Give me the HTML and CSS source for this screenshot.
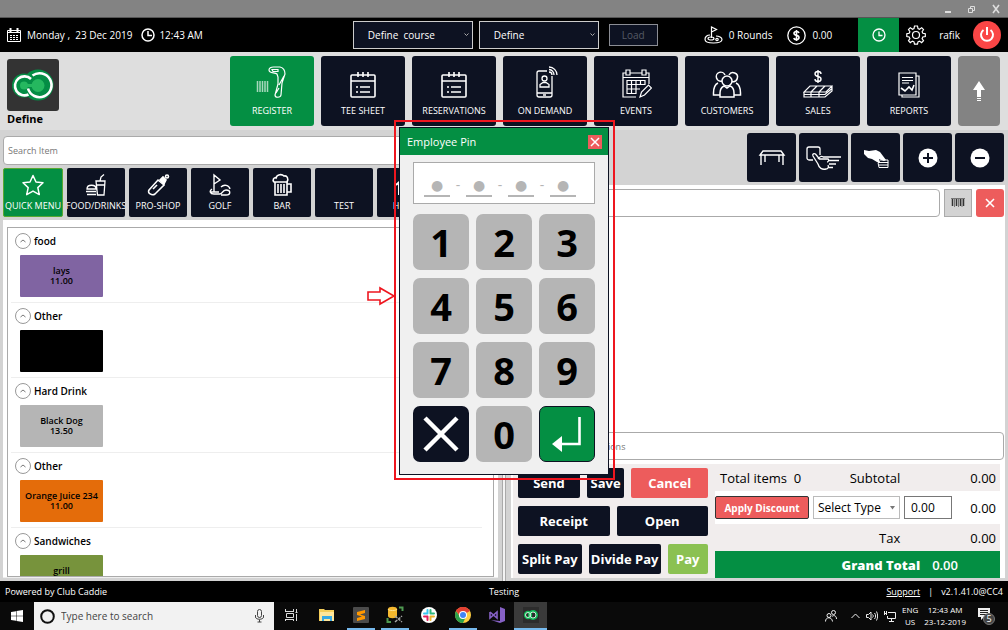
FILE: index.html
```html
<!DOCTYPE html>
<html lang="en">
	<head>
		<meta charset="utf-8">
		<title>Club Caddie Register</title>
		<meta name="viewport" content="width=device-width, initial-scale=1">
		<link rel="stylesheet" href="styles.css">
	</head>
	<body>
		<!-- Window title bar -->
		<div class="titlebar">
			<button class="win-btn" aria-label="Minimize"><svg width="10" height="10" viewBox="0 0 10 10"><path d="M2 7h6v2H2z" fill="#ddd"/></svg></button>
			<button class="win-btn" aria-label="Restore"><svg width="10" height="10" viewBox="0 0 10 10" fill="none" stroke="#ddd"><path d="M1.500 4.500h4v4h-4zM3.500 4V2.500h4v4H6"/></svg></button>
			<button class="win-btn" aria-label="Close"><svg width="10" height="10" viewBox="0 0 10 10" stroke="#ddd" stroke-width="1.600"><path d="M2 1l6 8M8 1L2 9"/></svg></button>
		</div>

		<!-- Date, course choice and user -->
		<header class="topbar">
			<div class="clock">
				<svg width="14" height="14" viewBox="0 0 14 14" fill="none" stroke="#fff"><path d="M.5 2.500h13v11H.5zM1 4.500h12" /><path d="M3.500 0v4M10.500 0v4" stroke-width="2"/><path d="M3 7.500h8M3 9.500h8M3 11.500h8" stroke-dasharray="2 1"/></svg>
				<span class="date">Monday ,&nbsp; 23 Dec 2019</span>
				<svg width="14" height="14" viewBox="0 0 14 14" fill="none" stroke="#fff" stroke-width="1.500"><circle cx="7" cy="7" r="6"/><path d="M7 3v4.500h4"/></svg>
				<span>12:43 AM</span>
			</div>
			<div class="pickers">
				<label class="picker">
					<select aria-label="Course"><option>Define&nbsp; course</option></select>
					<svg width="5" height="4" viewBox="0 0 5 4" fill="none" stroke="#aaa"><path d="M.5.5l2 2 2-2"/></svg>
				</label>
				<label class="picker">
					<select aria-label="Register"><option>Define</option></select>
					<svg width="5" height="4" viewBox="0 0 5 4" fill="none" stroke="#aaa"><path d="M.5.5l2 2 2-2"/></svg>
				</label>
				<button class="load" disabled>Load</button>
			</div>
			<div class="user">
				<svg width="19" height="18" viewBox="0 0 19 18" fill="none" stroke="#fff" stroke-width="1.200"><path d="M7.500 12V1l5 2.500-5 2.500"/><path d="M6 9C3 9 1 11 1 13.200 1 15.500 4 17 9.500 17S18 15.500 18 13.500 15 10 12 10"/><ellipse cx="7" cy="12.500" rx="3" ry="1.500"/><circle cx="13" cy="13.500" r="1.200"/></svg>
				<span class="rounds">0 Rounds</span>
				<svg width="19" height="19" viewBox="0 0 19 19" fill="none" stroke="#fff" stroke-width="1.300"><circle cx="9.500" cy="9.500" r="8.700"/><path d="M12 7c-.3-1-1.200-1.500-2.500-1.500S7 6 7 7.300s1 1.800 2.500 2.100S12 10.300 12 11.600s-1 2-2.500 2S7 13 6.800 12M9.500 4v11" stroke-width="1.600"/></svg>
				<span class="cash">0.00</span>
				<button class="time-btn" aria-label="Time clock"><svg width="14" height="14" viewBox="0 0 14 14" fill="none" stroke="#fff" stroke-width="1.300"><circle cx="7" cy="7" r="6"/><path d="M7 3.500V7.500h3.500"/></svg></button>
				<button class="plain" aria-label="Settings"><svg width="20" height="20" viewBox="0 0 20 20" fill="none" stroke="#fff" stroke-width="1.200"><path d="M8.500 1h3l.5 2.500 1.500.7 2.200-1.500 1.800 1.800-1.400 2.200.7 1.600 2.500.4v2.800l-2.500.5-.7 1.600 1.400 2.100-1.900 1.900-2.100-1.500-1.500.7-.5 2.400h-3l-.5-2.400-1.500-.7-2.200 1.500-1.800-1.900 1.400-2.100-.7-1.600L.8 11.500V8.700l2.400-.4.7-1.600L2.500 4.500l1.800-1.800 2.200 1.500L8 3.500z"/><circle cx="10" cy="10" r="3.500"/></svg></button>
				<span class="name">rafik</span>
				<button class="power" aria-label="Log out"><svg width="16" height="16" viewBox="0 0 16 16" fill="none" stroke="#fff" stroke-width="2"><path d="M8 0v8M4.500 3a6 6 0 1 0 7 0"/></svg></button>
			</div>
		</header>

		<!-- Main navigation -->
		<nav class="nav">
			<div class="brand">
				<div class="logo">
					<svg width="52" height="52" viewBox="0 0 52 52"><g fill="#048d45"><circle cx="17" cy="26.500" r="12"/><circle cx="31" cy="26" r="15.500"/></g><g fill="#25b85f"><circle cx="17" cy="26.500" r="4"/><circle cx="31" cy="26.500" r="6.500"/><path d="M17 25h14v3H17z"/></g><g fill="none" stroke="#fff" stroke-width="2.600"><path d="M24 20a9.500 9.500 0 1 0-2.500 15.500"/><path d="M25.500 16.500a12 12 0 1 1-4.500 13"/></g></svg>
				</div>
				<strong>Define</strong>
			</div>
			<button class="nav-btn active">
				<svg width="32" height="34" viewBox="0 0 32 34" fill="none" stroke="#fff" stroke-width="1.200"><path d="M1.500 15v11M4 15v11M6.500 15v11M9 15v11M11.500 15v11" stroke="#a6d8bd" stroke-width="1.500"/><path d="M13 4c0-2 2-3 4.500-3H24c4 1 5 4 5 7l-3 9-1 12c-.5 3-6 3-6 0l3-11V11l-1-3c-2-2-8 0-8-4zM16 3.500h6v2h-5zM23 19l5-9M20 27l3-5"/></svg>
				REGISTER
			</button>
			<button class="nav-btn">
				<svg width="28" height="34" viewBox="0 0 28 34" fill="none" stroke="#fff" stroke-width="1.600"><rect x="2" y="9" width="24" height="22" rx="1"/><path d="M2 15h24M9 6v5M14 6v5M19 6v5M7 21h2M11 21h10M7 26h2M11 26h10"/></svg>
				TEE SHEET
			</button>
			<button class="nav-btn">
				<svg width="28" height="34" viewBox="0 0 28 34" fill="none" stroke="#fff" stroke-width="1.600"><rect x="2" y="9" width="24" height="22" rx="1"/><path d="M2 15h24M9 6v5M14 6v5M19 6v5M7 21h2M11 21h10M7 26h2M11 26h10"/></svg>
				RESERVATIONS
			</button>
			<button class="nav-btn">
				<svg width="28" height="34" viewBox="0 0 28 34" fill="none" stroke="#fff" stroke-width="1.300"><path d="M16 5H8a2 2 0 0 0-2 2v22a2 2 0 0 0 2 2h11a2 2 0 0 0 2-2V10M6 27h15M12 29h3"/><circle cx="13.500" cy="12.500" r="2.500"/><path d="M9 21v-2.500l3-2h3l3 2V21zM18 6a3 3 0 0 1 3 3M18 3.500A5.500 5.500 0 0 1 23 9M18 1a8 8 0 0 1 8 8"/></svg>
				ON DEMAND
			</button>
			<button class="nav-btn">
				<svg width="32" height="34" viewBox="0 0 32 34" fill="none" stroke="#fff" stroke-width="1.200"><path d="M16 31H3V7h3M10 7h12M26 7h3v11M3 11.500h26"/><path d="M6 4h4v5H6zM22 4h4v5h-4zM7 14.500h18v4H7zM7 18.500h9v9H7zM7 23h13M11.500 14.500v13M16 14.500v4M20.500 14.500v4M20 31l1.500-5 7-7 3 3-7 7z"/></svg>
				EVENTS
			</button>
			<button class="nav-btn">
				<svg width="30" height="34" viewBox="0 0 30 34" fill="none" stroke="#fff" stroke-width="1.500"><circle cx="15" cy="15" r="5"/><path d="M8 31v-4c0-4 2-6 4-7l3 2 3-2c3 1 4 3 4 7v4zM10 15a4.500 4.500 0 1 1 3-6M17 9a4.500 4.500 0 1 1 3 6.500M6 17c-3 1.500-4.500 5-4.500 10v2H8M24 17c3 1.500 4.500 5 4.500 10v2H22"/></svg>
				CUSTOMERS
			</button>
			<button class="nav-btn">
				<svg width="30" height="34" viewBox="0 0 30 34" fill="none" stroke="#fff" stroke-width="1.200"><path d="M18 8c0-1.500-1-2.500-3-2.500S12 6.500 12 8s1 2 3 2.500 3 1 3 2.500-1 2.500-3 2.500-3-1-3-2.500M15 4v13" stroke-width="1.400"/><path d="M7 20h22l-6 6H1zM14 20l-6 6M22 20l-6 6M1 26v5h21l7-6v-5M1 28.500h21l7-6M8 26v5M16 26v5"/></svg>
				SALES
			</button>
			<button class="nav-btn">
				<svg width="26" height="34" viewBox="0 0 26 34" fill="none" stroke="#fff" stroke-width="1.200"><path d="M3 7h17v22H3zM20 10h3v21H6v-2M6 11.500h11M6 14.500h11M6 17h7"/><path d="M5 22l4 3 4-4 3 3 2-5" stroke-width="1.600"/></svg>
				REPORTS
			</button>
			<button class="nav-up" aria-label="Scroll up"><svg width="12" height="22" viewBox="0 0 12 22" fill="#fff"><path d="M6 1l6 9H8v7H4v-7H0zM4 18h4v1H4zM4 20h4v1H4z"/></svg></button>
		</nav>

		<main class="main">
			<!-- Item menu -->
			<section class="menu">
				<input class="search" type="text" placeholder="Search Item" aria-label="Search Item">
				<div class="tabs">
					<button class="tab active">
						<svg width="24" height="24" viewBox="0 0 24 24" fill="none" stroke="#fff" stroke-width="1.500" stroke-linejoin="round"><path d="M12 2.500l3 6.500 7 .8-5.200 4.800 1.500 7-6.300-3.500-6.300 3.500 1.500-7L2 9.800 9 9z"/></svg>
						QUICK MENU
					</button>
					<button class="tab">
						<svg width="24" height="24" viewBox="0 0 24 24" fill="none" stroke="#fff" stroke-width="1.300"><path d="M12 8h9l-1 14h-6.500zM16 8l1-4 3-2.500M13 12h8M3 16c0-5 9-5 9 0zM2 18.500h10M3 21.500h9"/></svg>
						FOOD/DRINKS
					</button>
					<button class="tab">
						<svg width="24" height="24" viewBox="0 0 24 24" fill="none" stroke="#fff" stroke-width="1.600"><path d="M3 17l9-10 6 5-9 9c-3 2-8-1-6-4z"/><path d="M14 7l4 4 2-4-3-3z" fill="#fff"/><circle cx="21" cy="3.500" r="1.500"/><path d="M7 16l4-4"/></svg>
						PRO-SHOP
					</button>
					<button class="tab">
						<svg width="24" height="24" viewBox="0 0 24 24" fill="none" stroke="#fff" stroke-width="1.400"><path d="M6 19V2l6 5-6 4M4 16c-3 2-2 5 2 5h6c3 0 2-4 6-4 5 0 5 5 0 5h-5M13 14c3-3 8-2 9 2M3 19h8"/></svg>
						GOLF
					</button>
					<button class="tab">
						<svg width="24" height="24" viewBox="0 0 24 24" fill="none" stroke="#fff" stroke-width="1.600"><path d="M5 9v13h12V9M17 11h4v8h-4M8 11v9M11 11v9M14 11v9"/><path d="M4 9c-2-2 0-5 2-4 1-4 6-4 8-2 3-1 5 3 3 6z"/></svg>
						BAR
					</button>
					<button class="tab">
						<svg width="24" height="24" viewBox="0 0 24 24"></svg>
						TEST
					</button>
					<button class="tab">
						<svg width="24" height="24" viewBox="0 0 24 24" fill="none" stroke="#fff" stroke-width="2"><path d="M2 12L12 3l10 9M5 11v10h5v-6h4v6h5V11"/></svg>
						HOME
					</button>
				</div>
				<div class="list-frame">
					<div class="list">
						<section class="group">
							<h2><button class="fold" aria-label="Collapse food"><svg width="6" height="4" viewBox="0 0 6 4" fill="none" stroke="#777"><path d="M.5 3L3 1l2.500 2"/></svg></button>food</h2>
							<button class="item purple">lays<br>11.00</button>
						</section>
						<section class="group">
							<h2><button class="fold" aria-label="Collapse Other"><svg width="6" height="4" viewBox="0 0 6 4" fill="none" stroke="#777"><path d="M.5 3L3 1l2.500 2"/></svg></button>Other</h2>
							<button class="item black" aria-label="Item"></button>
						</section>
						<section class="group">
							<h2><button class="fold" aria-label="Collapse Hard Drink"><svg width="6" height="4" viewBox="0 0 6 4" fill="none" stroke="#777"><path d="M.5 3L3 1l2.500 2"/></svg></button>Hard Drink</h2>
							<button class="item gray">Black Dog<br>13.50</button>
						</section>
						<section class="group">
							<h2><button class="fold" aria-label="Collapse Other"><svg width="6" height="4" viewBox="0 0 6 4" fill="none" stroke="#777"><path d="M.5 3L3 1l2.500 2"/></svg></button>Other</h2>
							<button class="item orange">Orange Juice 234<br>11.00</button>
						</section>
						<section class="group">
							<h2><button class="fold" aria-label="Collapse Sandwiches"><svg width="6" height="4" viewBox="0 0 6 4" fill="none" stroke="#777"><path d="M.5 3L3 1l2.500 2"/></svg></button>Sandwiches</h2>
							<button class="item green">grill<br>&nbsp;</button>
						</section>
					</div>
				</div>
			</section>

			<div class="splitter"></div>

			<!-- Current order -->
			<section class="order">
				<div class="actions">
					<button class="action" aria-label="Table"><svg width="28" height="24" viewBox="0 0 28 24" fill="none" stroke="#fff" stroke-width="1.400"><path d="M5 5h18l3 4H2zM3 9v10M25 9v10M7 9v7M21 9v7"/></svg></button>
					<button class="action" aria-label="Select"><svg width="36" height="28" viewBox="0 0 36 28" fill="none" stroke="#fff" stroke-width="1.300"><path d="M7 16H3a2 2 0 0 1-2-2V5a2 2 0 0 1 2-2h9a2 2 0 0 1 2 2v6"/><path d="M12 20L7 12c-1-2 1-3 2.500-2l4 5H22c1 0 1 3-1 3M12 20c1 4 4 6 8 5 2 0 3-2 2-4M17 13h18M22 16.500h11M23 20h7M22 23.500h5M12 15c2-3 4-3 5-2"/></svg></button>
					<button class="action" aria-label="Card payment"><svg width="28" height="24" viewBox="0 0 28 24"><path d="M2 4l5 1 7-1 4 2 6 8-2 1-5-2 1 3-3 0-5-3-4-1-4-4z" fill="#fff"/><path d="M16 16.500h10v5H17zM17 19h9M18 14h8v3" fill="none" stroke="#fff"/></svg></button>
					<button class="action" aria-label="Add"><svg width="20" height="20" viewBox="0 0 20 20"><circle cx="10" cy="10" r="9.500" fill="#fff"/><path d="M10 5v10M5 10h10" stroke="#0d1222" stroke-width="2"/></svg></button>
					<button class="action" aria-label="Remove"><svg width="20" height="20" viewBox="0 0 20 20"><circle cx="10" cy="10" r="9.500" fill="#fff"/><path d="M5 10h10" stroke="#0d1222" stroke-width="2"/></svg></button>
				</div>
				<div class="order-body">
					<div class="scan">
						<input class="field" type="text" aria-label="Customer">
						<button class="barcode" aria-label="Scan barcode"><svg width="14" height="10" viewBox="0 0 14 10" stroke="#333"><path d="M0 .5h14" stroke="#777"/><path d="M1.500 1v7M5.500 1v7M9.500 1v7M12.500 1v7" stroke-width="1.500"/><path d="M3.500 1v8M7.500 1v8M11 1v8" stroke="#777"/></svg></button>
						<button class="clear" aria-label="Clear"><svg width="10" height="10" viewBox="0 0 10 10" stroke="#fff" stroke-width="1.600"><path d="M1 1l8 8M9 1L1 9"/></svg></button>
					</div>
					<div class="lines"></div>
					<input class="field note" type="text" placeholder="Special Instructions" aria-label="Special Instructions">
					<div class="checkout">
						<div class="pay">
							<div class="pay-row"><button class="send">Send</button><button class="save">Save</button><button class="cancel">Cancel</button></div>
							<div class="pay-row halves"><button>Receipt</button><button>Open</button></div>
							<div class="pay-row"><button class="split">Split Pay</button><button class="divide">Divide Pay</button><button class="pay-now">Pay</button></div>
						</div>
						<div class="totals">
							<div class="total-row">
								<span>Total items&nbsp; 0</span>
								<span class="label">Subtotal</span>
								<span class="value">0.00</span>
							</div>
							<div class="total-row discount">
								<button class="apply">Apply Discount</button>
								<label class="type"><select aria-label="Discount type"><option>Select Type</option></select><svg width="5" height="4" viewBox="0 0 5 4" fill="#777"><path d="M0 0h5L2.500 3.500z"/></svg></label>
								<input class="amount" type="text" value="0.00" aria-label="Discount amount">
								<span class="value">0.00</span>
							</div>
							<div class="total-row">
								<span class="label">Tax</span>
								<span class="value">0.00</span>
							</div>
							<div class="total-row grand"><strong>Grand Total</strong><span>0.00</span></div>
						</div>
					</div>
				</div>
			</section>
		</main>

		<footer class="status">
			<span>Powered by Club Caddie</span>
			<span>Testing</span>
			<span class="version"><a href="#">Support</a><span>|</span><span>v2.1.41.0@CC4</span></span>
		</footer>

		<!-- Desktop taskbar -->
		<div class="taskbar">
			<button class="start" aria-label="Start"><svg width="12" height="12" viewBox="0 0 12 12" fill="#fff"><path d="M0 2l5-.8v4.500H0zM5.500 1L12 0v5.700H5.500zM0 6.300h5v4.500L0 10zM5.500 6.300H12V12l-6.500-1z"/></svg></button>
			<label class="find">
				<svg width="15" height="15" viewBox="0 0 15 15" fill="none" stroke="#111" stroke-width="2"><circle cx="7.500" cy="7.500" r="6.300"/></svg>
				<input type="text" placeholder="Type here to search" aria-label="Type here to search">
				<svg width="9" height="14" viewBox="0 0 9 14" fill="none" stroke="#444"><rect x="2.500" y=".5" width="4" height="8" rx="2"/><path d="M.5 6v2c0 3 8 3 8 0V6M4.500 10.500V13M2.500 13h4"/></svg>
			</label>
			<div class="apps">
				<button class="app view" aria-label="Task view"><svg width="13" height="12" viewBox="0 0 13 12" fill="none" stroke="#ddd"><path d="M.5 0v2M8.500 0v2M0 2.500h9M1.500 4.500h7v4h-7zM0 10.500h9M.5 10v2M8.500 10v2M11.500 0v3M11.500 5v7M10.500 3.500h2"/></svg></button>
				<button class="app" aria-label="File Explorer"><svg width="16" height="14" viewBox="0 0 16 14"><path d="M0 1h5l1 1h9v11H0z" fill="#f5ce5a"/><path d="M1 4h14v9H1z" fill="#ffe69a"/><path d="M3 8h10v5h-2v-2H5v2H3z" fill="#38a9e4"/></svg></button>
				<button class="app open" aria-label="Sublime Text"><svg width="18" height="18" viewBox="0 0 18 18"><rect x="1" y="1" width="16" height="16" rx="1" fill="#4b4b4b"/><path d="M13 4v3L8 8.500l5 1.500v3l-8 2v-3l5-1.500L5 9V6z" fill="#ff9800"/></svg></button>
				<button class="app open" aria-label="SQL Server"><svg width="18" height="18" viewBox="0 0 18 18"><path d="M2 3c0-3 9-3 9 0v7c0 3-9 3-9 0z" fill="#f5b82e"/><path d="M2 3c0 2 9 2 9 0" fill="none" stroke="#ffe391"/><path d="M13 1.500h3.500V5M1.500 12v4H5" stroke="#4f9a51" stroke-width="2" fill="none"/><path d="M9 16l7-6M9 10l7 6" stroke="#aaa" stroke-width="1.500" stroke-dasharray="3 1"/></svg></button>
				<button class="app" aria-label="Slack"><svg width="16" height="16" viewBox="0 0 16 16"><circle cx="8" cy="8" r="8" fill="#fff"/><g fill="none" stroke-width="2" stroke-linecap="round"><path d="M6.500 3v3.500M3 6.500h3" stroke="#36c5f0"/><path d="M9.500 3v3.500M10 6.500h3" stroke="#2eb67d"/><path d="M9.500 9.500V13M10 9.500h3" stroke="#ecb22e"/><path d="M6.500 9.500V13M3 9.500h3" stroke="#e01e5a"/></g></svg></button>
				<button class="app open" aria-label="Chrome"><svg width="16" height="16" viewBox="0 0 16 16"><circle cx="8" cy="8" r="8" fill="#ffcd40"/><path d="M8 8L1.100 4A8 8 0 0 1 14.900 4z" fill="#e34133"/><path d="M1.100 4A8 8 0 0 0 8 16l3-6.500H5z" fill="#2ba24c"/><path d="M8 4h6.900A8 8 0 0 0 1.100 4L5 9z" fill="#e34133"/><circle cx="8" cy="8" r="4" fill="#fff"/><circle cx="8" cy="8" r="3" fill="#4285f4"/></svg></button>
				<button class="app" aria-label="Visual Studio"><svg width="17" height="16" viewBox="0 0 17 16"><path d="M1 5v6l7-6v6L1 5" fill="none" stroke="#8661c5" stroke-width="1.600"/><path d="M11 0l5 2v12l-5 2-9-3 9 1z" fill="#8661c5"/></svg></button>
				<button class="app open current" aria-label="Club Caddie"><svg width="16" height="16" viewBox="0 0 16 16" fill="none" stroke="#12b857" stroke-width="2"><rect width="16" height="16" fill="#2c2c2c" stroke="none"/><circle cx="5" cy="8" r="3.200"/><circle cx="10" cy="8" r="4"/><circle cx="10" cy="8" r="3" stroke="#c8f0d8" stroke-width="1"/><circle cx="5" cy="8" r="2.500" stroke="#c8f0d8" stroke-width="1"/></svg></button>
			</div>
			<div class="tray">
				<svg class="people" width="12" height="12" viewBox="0 0 12 12" fill="none" stroke="#eee"><circle cx="4" cy="5.500" r="2"/><path d="M.5 11.500c0-5 6.500-5 7 0"/><circle cx="8.500" cy="2.500" r="2"/><path d="M7 6.500c2-2 4.500-.5 4.500 2.500"/></svg>
				<svg width="9" height="6" viewBox="0 0 9 6" fill="none" stroke="#eee"><path d="M.5 5l4-4 4 4"/></svg>
				<svg width="12" height="12" viewBox="0 0 12 12" fill="none" stroke="#eee"><path d="M.5 4.500h2L5 2v8L2.500 7.500h-2zM6.500 4.500c1 1 1 2 0 3M8.500 3c1.500 2 1.500 4 0 6M10.500 1.500c1.500 3 1.500 6 0 9"/></svg>
				<svg width="12" height="12" viewBox="0 0 12 12" fill="none" stroke="#eee"><path d="M4 2.500h7.500v6h-8V6M7.500 8.500v3M5 11.500h5M.5 1v4M2.500 1v4M0 3.500h3"/></svg>
				<span class="stack">ENG<br>US</span>
				<span class="stack when">12:43 AM<br>23-12-2019</span>
				<svg width="18" height="18" viewBox="0 0 18 18"><path d="M1 1h12v9H7l-3 3v-3H1z" fill="#eee"/><path d="M3 3.500h8M3 5.500h8M3 7.500h8" stroke="#222"/><circle cx="12" cy="12" r="5.500" fill="#444" stroke="#777"/><text class="badge" x="12" y="15" text-anchor="middle">5</text></svg>
			</div>
		</div>

		<!-- Pin pad, framed by the callout -->
		<div class="callout">
			<svg class="arrow" width="29" height="20" viewBox="0 0 29 20" fill="#fff" stroke="#ee161f" stroke-width="1.600"><path d="M1 6h12V2l14 8-14 8v-4H1z"/></svg>
			<form class="pin" role="dialog" aria-label="Employee Pin">
				<div class="pin-head">
					<span>Employee Pin</span>
					<button type="button" class="pin-close" aria-label="Close"><svg width="10" height="10" viewBox="0 0 10 10" stroke="#fff" stroke-width="1.500"><path d="M1 1l8 8M9 1L1 9"/></svg></button>
				</div>
				<div class="pin-body">
					<div class="digits">
						<input type="text" placeholder="●" maxlength="1" aria-label="Digit 1"><span>-</span><input type="text" placeholder="●" maxlength="1" aria-label="Digit 2"><span>-</span><input type="text" placeholder="●" maxlength="1" aria-label="Digit 3"><span>-</span><input type="text" placeholder="●" maxlength="1" aria-label="Digit 4">
					</div>
					<div class="keys">
						<button type="button">1</button>
						<button type="button">2</button>
						<button type="button">3</button>
						<button type="button">4</button>
						<button type="button">5</button>
						<button type="button">6</button>
						<button type="button">7</button>
						<button type="button">8</button>
						<button type="button">9</button>
						<button type="button" class="erase" aria-label="Clear"><svg width="36" height="36" viewBox="0 0 36 36" stroke="#fff" stroke-width="4.500"><path d="M2 2l32 32M34 2L2 34"/></svg></button>
						<button type="button">0</button>
						<button type="button" class="enter" aria-label="Enter"><svg width="30" height="36" viewBox="0 0 30 36"><path d="M27.500 1v27H9" fill="none" stroke="#fff" stroke-width="2.600"/><path d="M0 28l10-8v16z" fill="#fff"/></svg></button>
					</div>
				</div>
			</form>
		</div>
	</body>
</html>
```
FILE: styles.css
```css
* {
	box-sizing: border-box;
}
body {
	display: flex;
	flex-direction: column;
	height: 100vh;
	margin: 0;
	overflow: hidden;
	background-color: #d3d3d3;
	color: #000;
	font-family: "Open Sans", "Noto Sans", sans-serif;
	font-size: 10px;
}
button, input, select {
	margin: 0;
	padding: 0;
	border: none;
	border-radius: 0;
	background: none;
	color: inherit;
	font-family: inherit;
	font-size: inherit;
}
select {
	appearance: none;
}
svg {
	display: block;
	flex: none;
}

/* Title bar */
.titlebar {
	display: flex;
	justify-content: flex-end;
	align-items: center;
	gap: 14px;
	height: 18px;
	padding-right: 7px;
	background-color: #838383;
	border-bottom: 1px solid #555;
}

/* Top bar */
.topbar {
	display: flex;
	height: 34px;
	background-color: #000;
	color: #fff;
}
.clock {
	display: flex;
	align-items: center;
	gap: 4px;
	width: 35%;
	padding-left: 7px;
}
.date {
	margin: 0 5px 0 2px;
}
.pickers {
	display: flex;
	align-items: center;
	gap: 6px;
}
.picker {
	display: flex;
	align-items: center;
	width: 120px;
	height: 28px;
	padding: 0 3px 0 14px;
	border: 1px solid #ccc;
	background-color: #0d1222;
}
.picker select {
	flex: 1;
	height: 100%;
}
.load {
	width: 49px;
	height: 22px;
	margin-left: 4px;
	border: 1px solid #8b8d94;
	background-color: #0d1222;
	color: #555a66;
}
.user {
	display: flex;
	align-items: center;
	margin-left: auto;
	padding-right: 7px;
}
.rounds {
	margin: 0 15px 0 6px;
}
.cash {
	margin: 0 26px 0 6px;
}
.time-btn {
	display: flex;
	justify-content: center;
	align-items: center;
	width: 41px;
	height: 100%;
	margin-right: 7px;
	background-color: #048f43;
}
.name {
	margin: 0 13px;
}
.power {
	display: flex;
	justify-content: center;
	align-items: center;
	width: 28px;
	height: 28px;
	border-radius: 50%;
	background-color: #fa4646;
}

/* Navigation */
.nav {
	display: flex;
	gap: 7px;
	height: 78px;
	padding: 4px 8px 4px 7px;
	background-color: #dedede;
}
.brand {
	flex: 1;
	padding-top: 3px;
	font-size: 11px;
	line-height: 16px;
}
.logo {
	width: 52px;
	height: 52px;
	border-radius: 3px;
	background-color: #333;
}
.nav-btn {
	display: flex;
	flex-direction: column;
	align-items: center;
	gap: 4px;
	width: 84px;
	height: 70px;
	padding-top: 10px;
	border-radius: 3px;
	background-color: #0d1222;
	color: #fff;
	font-size: 9px;
	line-height: 14px;
}
.nav-btn.active {
	background-color: #048f43;
}
.nav-up {
	display: flex;
	justify-content: center;
	align-items: center;
	width: 42px;
	height: 70px;
	border-radius: 4px;
	background-color: #838383;
}

/* Main area */
.main {
	display: grid;
	grid-template-columns: minmax(0, 1fr) 4px minmax(0, 1fr);
	flex: 1;
	min-height: 0;
}
.menu {
	display: flex;
	flex-direction: column;
	min-height: 0;
	padding: 6px 4px 3px 3px;
}
.search {
	height: 29px;
	margin-bottom: 3px;
	padding: 0 4px;
	border: 1px solid #aaa;
	border-radius: 4px;
	background-color: #fff;
	font-size: 9px;
}
.search::placeholder, .field::placeholder {
	color: #777;
}
.tabs {
	display: flex;
	gap: 4px;
	margin-bottom: 3px;
	overflow: hidden;
}
.tab {
	display: flex;
	flex: none;
	flex-direction: column;
	align-items: center;
	gap: 2px;
	width: 58px;
	height: 49px;
	padding-top: 5px;
	overflow: hidden;
	border-radius: 2px;
	background-color: #0d1222;
	color: #fff;
	font-size: 9px;
	line-height: 14px;
	white-space: nowrap;
}
.tab.active {
	width: 60px;
	border: 1px solid #5aa832;
	padding-top: 4px;
	background-color: #048f43;
}
.list-frame {
	display: flex;
	flex: 1;
	min-height: 0;
	padding: 7px 4px 0;
	background-color: #fff;
	border-bottom: 1px solid #eee;
}
.list {
	flex: 1;
	overflow: hidden;
	padding: 0 11px 0 3px;
	border: 1px solid #aaa;
}
.group {
	height: 75px;
	padding: 5px 0 0 4px;
	border-bottom: 1px solid #eee;
}
.group h2 {
	display: flex;
	align-items: center;
	gap: 3px;
	height: 16px;
	margin: 0 0 6px;
	font-size: 10px;
	font-weight: 600;
}
.fold {
	display: flex;
	justify-content: center;
	align-items: center;
	width: 16px;
	height: 16px;
	border: 1px solid #999;
	border-radius: 50%;
}
.item {
	display: block;
	width: 83px;
	height: 42px;
	margin-left: 5px;
	border-radius: 1px;
	font-size: 9px;
	font-weight: 600;
	line-height: 10px;
}
.purple {
	background-color: #8064a2;
}
.black {
	background-color: #000;
}
.gray {
	background-color: #b5b5b5;
}
.orange {
	background-color: #e46c0a;
}
.green {
	background-color: #77933c;
}
.splitter {
	border: 1px solid #aaa;
	border-width: 0 1px;
	background-color: #f4f4f4;
}

/* Order side */
.order {
	display: flex;
	flex-direction: column;
	min-height: 0;
	padding: 3px 3px 3px 5px;
}
.actions {
	display: flex;
	justify-content: flex-end;
	gap: 3px;
	margin-bottom: 3px;
	padding-right: 1px;
}
.action {
	display: flex;
	justify-content: center;
	align-items: center;
	width: 49px;
	height: 49px;
	border-radius: 3px;
	background-color: #0d1222;
}
.order-body {
	display: flex;
	flex: 1;
	flex-direction: column;
	min-height: 0;
	padding: 4px 1px 0 0;
	background-color: #fff;
}
.scan {
	display: flex;
	gap: 4px;
}
.field {
	height: 28px;
	padding: 0 4px;
	border: 1px solid #aaa;
	border-radius: 4px;
	background-color: #fff;
	font-size: 9px;
}
.scan .field {
	flex: 1;
}
.note {
	padding-left: 32px;
}
.barcode, .clear {
	display: flex;
	justify-content: center;
	align-items: center;
	width: 28px;
	height: 28px;
	border: 1px solid #aaa;
	background-color: #d3d3d3;
}
.clear {
	border: none;
	border-radius: 3px;
	background-color: #ed5c5c;
}
.lines {
	flex: 1;
}
.checkout {
	display: flex;
	gap: 7px;
	margin: 4px 4px 0 2px;
	background-color: #f1eded;
}
.pay {
	display: flex;
	flex: 1;
	flex-direction: column;
	gap: 8px;
	padding: 4px 0 4px 5px;
}
.pay-row {
	display: flex;
	gap: 7px;
}
.pay button {
	height: 30px;
	border-radius: 2px;
	background-color: #0d1222;
	color: #fff;
	font-size: 13px;
	font-weight: 700;
	white-space: nowrap;
}
.halves button {
	flex: 1;
}
.send, .split {
	flex: 63;
}
.save {
	flex: 38;
}
.divide {
	flex: 71;
}
.pay .cancel {
	flex: 78;
	background-color: #ed5c5c;
}
.pay .pay-now {
	flex: 40;
	background-color: #8bc152;
}
.totals {
	display: flex;
	flex-direction: column;
	width: 285px;
	font-size: 13px;
}
.total-row {
	display: flex;
	align-items: center;
	height: 27px;
	padding: 0 4px 0 5px;
}
.total-row .label {
	margin-left: auto;
	margin-right: 70px;
}
.discount {
	gap: 4px;
	height: 33px;
	padding-left: 0;
	background-color: #fff;
}
.discount .value {
	margin-left: auto;
}
.apply {
	width: 94px;
	height: 23px;
	border: 1px solid #333;
	border-radius: 2px;
	background-color: #ed5c5c;
	color: #fff;
	font-size: 10px;
	font-weight: 700;
}
.type {
	display: flex;
	align-items: center;
	width: 87px;
	height: 23px;
	padding: 0 4px;
	border: 1px solid #bbb;
	font-size: 12px;
}
.type select {
	flex: 1;
	min-width: 0;
	height: 100%;
}
.amount {
	width: 48px;
	height: 23px;
	padding-left: 6px;
	border: 1px solid #777;
	font-size: 12px;
}
.grand {
	justify-content: flex-end;
	gap: 12px;
	padding-right: 42px;
	background-color: #048f43;
	color: #fff;
	font-weight: 600;
}

/* Status bar */
.status {
	display: grid;
	grid-template-columns: 1fr auto 1fr;
	align-items: center;
	height: 21px;
	padding: 0 5px;
	background-color: #000;
	color: #fff;
	font-size: 9px;
}
.version {
	display: flex;
	justify-content: flex-end;
	gap: 8px;
}
.version a {
	color: #fff;
}

/* Taskbar */
.taskbar {
	display: flex;
	height: 28px;
	background-color: #0a0a0a;
	color: #fff;
}
.start {
	display: flex;
	justify-content: center;
	align-items: center;
	width: 34px;
}
.find {
	display: flex;
	align-items: center;
	gap: 6px;
	width: 240px;
	padding: 0 10px 0 6px;
	background-color: #f2f2f2;
	color: #444;
	font-size: 10px;
}
.find input {
	flex: 1;
	min-width: 0;
}
.find input::placeholder {
	color: #444;
}
.apps {
	display: flex;
}
.app {
	display: flex;
	justify-content: center;
	align-items: center;
	width: 28px;
	margin: 0 3px;
	border-bottom: 2px solid transparent;
}
.app.view {
	margin-right: 5px;
}
.app.open {
	border-bottom-color: #76b9ed;
}
.app.current {
	width: 33px;
	margin: 0;
	background-color: #3a3a3a;
}
.tray {
	display: flex;
	align-items: center;
	gap: 6px;
	margin-left: auto;
	padding-right: 13px;
}
.people {
	margin-right: 8px;
}
.stack {
	font-size: 8px;
	line-height: 12px;
	text-align: center;
}
.when {
	margin-right: 5px;
}
.badge {
	fill: #fff;
	font-size: 9px;
}

/* Pin pad */
.callout {
	position: absolute;
	top: 120px;
	left: calc(50% - 110px);
	width: 221px;
	padding: 5px 4px 3px 3px;
	border: 2px solid #ee161f;
}
.arrow {
	position: absolute;
	top: 164px;
	right: 100%;
}
.pin {
	border: 1px solid #0d1222;
	background-color: #f0f0f0;
}
.pin-head {
	display: flex;
	justify-content: space-between;
	align-items: center;
	height: 27px;
	padding: 0 6px 0 7px;
	background-color: #048f43;
	color: #fff;
	font-size: 11px;
}
.pin-close {
	display: flex;
	justify-content: center;
	align-items: center;
	width: 14px;
	height: 14px;
	background-color: #ed5c5c;
}
.pin-body {
	padding: 7px 13px 12px;
}
.digits {
	display: flex;
	height: 42px;
	margin-bottom: 10px;
	padding: 12px 0 0 10px;
	border: 1px solid #aaa;
	background-color: #fff;
	color: #b5b5b5;
}
.digits input {
	width: 26px;
	height: 22px;
	border-bottom: 2px solid #b5b5b5;
	font-family: "DejaVu Sans", sans-serif;
	font-size: 14px;
	text-align: center;
}
.digits input::placeholder {
	color: #b5b5b5;
}
.digits span {
	width: 16px;
	font-size: 14px;
	line-height: 20px;
	text-align: center;
}
.keys {
	display: grid;
	grid-template-columns: repeat(3, 1fr);
	gap: 8px 7px;
}
.keys button {
	display: flex;
	justify-content: center;
	align-items: center;
	height: 56px;
	border-radius: 7px;
	background-color: #b5b5b5;
	color: #000;
	font-size: 38px;
	font-weight: 700;
}
.keys .erase {
	background-color: #0d1222;
}
.keys .enter {
	border: 1px solid #0d1222;
	background-color: #048f43;
}
```
